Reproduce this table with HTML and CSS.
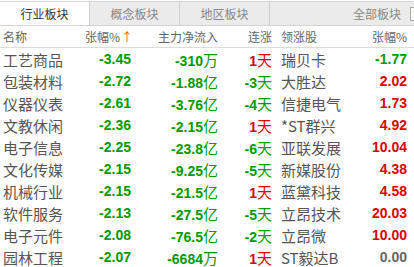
FILE: index.html
```html
<!DOCTYPE html>
<html>
<head>
<meta charset="utf-8">
<link rel="stylesheet" href="styles.css">
</head>
<body>
<div class="panel">
  <div class="tabs">
    <div class="tab active">行业板块</div>
    <div class="tab">概念板块</div>
    <div class="tab">地区板块</div>
    <div class="tab-rest"><span class="all">全部板块</span><span class="help">?</span></div>
  </div>
  <div class="row head">
    <span class="c-name">名称</span>
    <span class="c-num">张幅%<span class="arrow">↑</span></span>
    <span class="c-num">主力净流入</span>
    <span class="c-num">连涨</span>
    <span class="c-lead">领涨股</span>
    <span class="c-num">张幅%</span>
  </div>
  <div class="row"><span class="c-name">工艺商品</span><span class="c-num g">-3.45</span><span class="c-num g">-310<i>万</i></span><span class="c-num r">1<i>天</i></span><span class="c-lead">瑞贝卡</span><span class="c-num g">-1.77</span></div>
  <div class="row"><span class="c-name">包装材料</span><span class="c-num g">-2.72</span><span class="c-num g">-1.88<i>亿</i></span><span class="c-num g">-3<i>天</i></span><span class="c-lead">大胜达</span><span class="c-num r">2.02</span></div>
  <div class="row"><span class="c-name">仪器仪表</span><span class="c-num g">-2.61</span><span class="c-num g">-3.76<i>亿</i></span><span class="c-num g">-4<i>天</i></span><span class="c-lead">信捷电气</span><span class="c-num r">1.73</span></div>
  <div class="row"><span class="c-name">文教休闲</span><span class="c-num g">-2.36</span><span class="c-num g">-2.15<i>亿</i></span><span class="c-num r">1<i>天</i></span><span class="c-lead">*ST群兴</span><span class="c-num r">4.92</span></div>
  <div class="row"><span class="c-name">电子信息</span><span class="c-num g">-2.25</span><span class="c-num g">-23.8<i>亿</i></span><span class="c-num g">-6<i>天</i></span><span class="c-lead">亚联发展</span><span class="c-num r">10.04</span></div>
  <div class="row"><span class="c-name">文化传媒</span><span class="c-num g">-2.15</span><span class="c-num g">-9.25<i>亿</i></span><span class="c-num g">-5<i>天</i></span><span class="c-lead">新媒股份</span><span class="c-num r">4.38</span></div>
  <div class="row"><span class="c-name">机械行业</span><span class="c-num g">-2.15</span><span class="c-num g">-21.5<i>亿</i></span><span class="c-num r">1<i>天</i></span><span class="c-lead">蓝黛科技</span><span class="c-num r">4.58</span></div>
  <div class="row"><span class="c-name">软件服务</span><span class="c-num g">-2.13</span><span class="c-num g">-27.5<i>亿</i></span><span class="c-num g">-5<i>天</i></span><span class="c-lead">立昂技术</span><span class="c-num r">20.03</span></div>
  <div class="row"><span class="c-name">电子元件</span><span class="c-num g">-2.08</span><span class="c-num g">-76.5<i>亿</i></span><span class="c-num g">-2<i>天</i></span><span class="c-lead">立昂微</span><span class="c-num r">10.00</span></div>
  <div class="row"><span class="c-name">园林工程</span><span class="c-num g">-2.07</span><span class="c-num g">-6684<i>万</i></span><span class="c-num r">1<i>天</i></span><span class="c-lead">ST毅达B</span><span class="c-num n">0.00</span></div>
</div>
</body>
</html>
```

FILE: styles.css
```css
* { box-sizing: border-box; }
html, body { margin: 0; padding: 0; background: #fff; }
body {
  width: 414px;
  height: 267px;
  overflow: hidden;
  font-family: "Noto Sans CJK SC", "Liberation Sans", sans-serif;
}
.panel { width: 414px; }
.tabs {
  display: flex;
  height: 25px;
  margin-top: 1px;
  border-top: 1px solid #d4d4d4;
  border-bottom: 1px solid #d4d4d4;
  background: #ebebeb;
}
.tab {
  width: 90px;
  border-right: 1px solid #d0d0d0;
  display: flex;
  align-items: center;
  justify-content: center;
  font-size: 12px;
  color: #888;
  line-height: 1;
}
.tab.active { background: #fff; color: #333; }
.tab-rest {
  flex: 1;
  display: flex;
  align-items: center;
  font-size: 12px;
  color: #888;
  overflow: hidden;
  padding-left: 83px;
}
.all { margin-right: 9px; flex: none; }
.help {
  flex: none;
  width: 13px;
  height: 14px;
  border: 1px solid #aaa;
  font-family: "Liberation Sans", sans-serif;
  font-size: 11px;
  line-height: 12px;
  padding-left: 2px;
  color: #888;
  background: #fff;
}
.row {
  display: grid;
  grid-template-columns: 85px 46px 87px 54px 88px 47px;
  height: 22px;
  align-items: center;
  font-size: 15px;
  color: #555;
}
.row.head {
  height: 22px;
  font-size: 12px;
  color: #666;
  border-bottom: 1px solid #dcdcdc;
}
.c-name { padding-left: 3px; white-space: nowrap; }
.c-num {
  text-align: right;
  white-space: nowrap;
  font-family: "Liberation Sans", "Noto Sans CJK SC", sans-serif;
  font-weight: bold;
  font-size: 14px;
}
.head .c-num {
  font-family: "Noto Sans CJK SC", sans-serif;
  font-weight: normal;
  font-size: 12px;
}
.c-num i {
  font-style: normal;
  font-weight: normal;
  font-size: 15px;
  font-family: "Noto Sans CJK SC", sans-serif;
}
.c-lead { padding-left: 9px; white-space: nowrap; }
.arrow { color: #e05a00; font-weight: normal; margin-left: 1px; margin-right: 2px; }
.g { color: #009a00; }
.r { color: #e00000; }
.n { color: #666; }
```
